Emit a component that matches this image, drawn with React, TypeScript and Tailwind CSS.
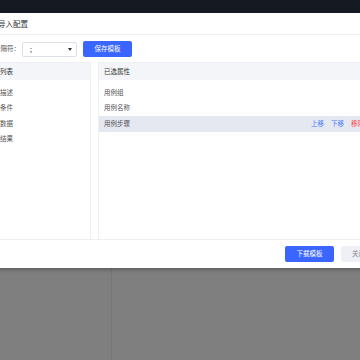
import { useState } from "react";

const fields = ["用例描述", "前置条件", "测试数据", "预期结果"];
const picked = ["用例组", "用例名称", "用例步骤"];

export default function App() {
  const [active] = useState(2);

  return (
    <div className="relative w-[360px] h-[360px] overflow-hidden bg-[#7f7f7f] font-['Noto_Sans_CJK_SC','Noto_Sans',sans-serif]">
      <div className="h-[13px] bg-[#151a22]" />
      <div className="flex">
        <div className="w-[112px] h-[347px] border-r border-[#767676]" />
      </div>

      {/* dialog */}
      <div className="absolute left-[-35px] top-[13px] w-[418px] h-[255px] bg-white flex flex-col shadow-[0_2px_4px_rgba(0,0,0,0.25)]">
        <div className="h-[22px] border-b border-[#eeeff2] flex items-center pl-[33px]">
          <span className="text-[7.5px] text-[#333]">导入配置</span>
        </div>

        <div className="flex items-center h-[22px] pt-[6px] pl-[29px]">
          <span className="text-[6.5px] text-[#555] w-[26px] whitespace-nowrap">分隔符：</span>
          <div className="ml-[2px] w-[55px] h-[15px] border border-[#dcdfe6] rounded-[2px] flex items-center justify-between pl-[7px] pr-[4px]">
            <span className="text-[7px] text-[#333]">;</span>
            <span className="block w-0 h-0 border-l-[2px] border-r-[2px] border-t-[3px] border-l-transparent border-r-transparent border-t-[#333]" />
          </div>
          <button className="ml-[6px] w-[49px] h-[16px] rounded-[2px] bg-[#3a66ff] text-white text-[6.5px]">
            保存模板
          </button>
        </div>

        <div className="flex gap-[7px] px-[16px] mt-[5px] flex-1">
          <div className="w-[110px] border-x border-t border-[#eeeff2] flex flex-col">
            <div className="h-[17px] bg-[#f4f5f8] flex items-center pl-[5px] text-[6.5px] text-[#333]">
              字段列表
            </div>
            <div className="pt-[5px]">
              {fields.map((f) => (
                <div key={f} className="h-[15.5px] flex items-center pl-[5px] text-[6.5px] text-[#555]">
                  {f}
                </div>
              ))}
            </div>
          </div>

          <div className="flex-1 border-x border-t border-[#eeeff2] flex flex-col">
            <div className="h-[17px] bg-[#f4f5f8] flex items-center pl-[5px] text-[6.5px] text-[#333]">
              已选属性
            </div>
            <div className="pt-[5px]">
              {picked.map((p, i) => (
                <div
                  key={p}
                  className={
                    "h-[15.5px] flex items-center justify-between pl-[5px] pr-[2px] text-[6.5px] text-[#555] " +
                    (i === active ? "bg-[#e5e7f1]" : "")
                  }
                >
                  <span>{p}</span>
                  {i === active && (
                    <span className="flex gap-[7px]">
                      <span className="text-[#4a7dff]">上移</span>
                      <span className="text-[#4a7dff]">下移</span>
                      <span className="text-[#ff4d4f]">移除</span>
                    </span>
                  )}
                </div>
              ))}
            </div>
          </div>
        </div>

        <div className="h-[29px] border-t border-[#eeeff2] flex items-center justify-end gap-[7px] pr-[7px]">
          <button className="w-[49px] h-[16px] rounded-[2px] bg-[#3a66ff] text-white text-[6.5px]">
            下载模板
          </button>
          <button className="w-[35px] h-[16px] rounded-[2px] bg-[#eef0f6] text-[#888] text-[6.5px]">
            关闭
          </button>
        </div>
      </div>
    </div>
  );
}
